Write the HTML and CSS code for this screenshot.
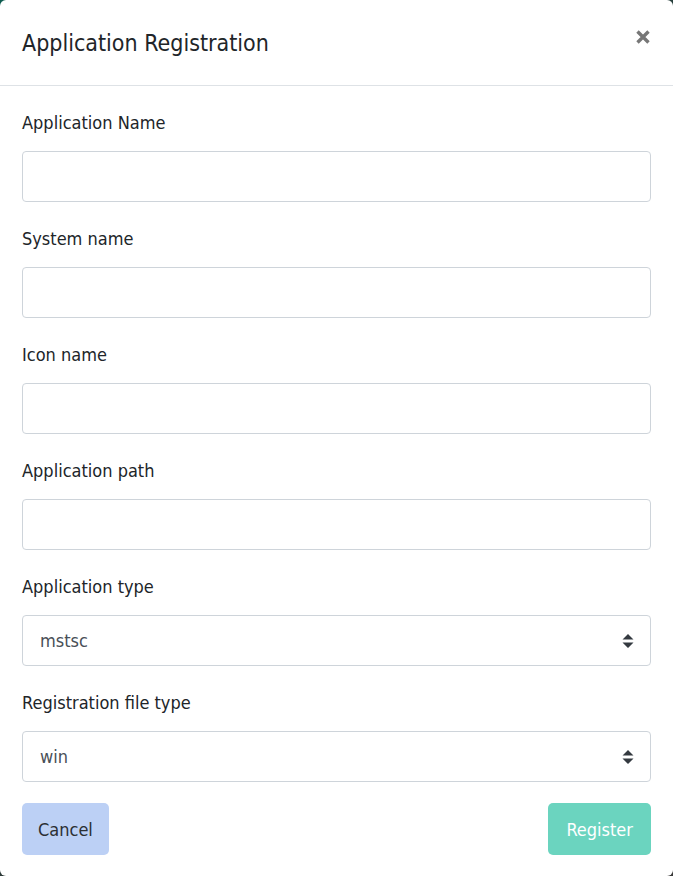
FILE: index.html
```
<!DOCTYPE html>
<html lang="en">
  <head>
    <meta charset="UTF-8" />
    <meta name="viewport" content="width=device-width, initial-scale=1.0" />
    <title>Application Registration</title>
    <link rel="stylesheet" href="styles.css">
  </head>
  <body>
    <div class="modal">
      <div class="modal-header">
        <h5 class="modal-title">Application Registration</h5>
        <button class="close" type="button" aria-label="Close">
          <svg width="16" height="16" viewBox="0 0 16 16">
            <path d="M2.5 2.5 L13.5 13.5 M13.5 2.5 L2.5 13.5" stroke="#777" stroke-width="3.4" stroke-linecap="butt" />
          </svg>
        </button>
      </div>
      <div class="modal-body">
        <div class="form-group">
          <label>Application Name</label>
          <input class="form-control" type="text">
        </div>
        <div class="form-group">
          <label>System name</label>
          <input class="form-control" type="text">
        </div>
        <div class="form-group">
          <label>Icon name</label>
          <input class="form-control" type="text">
        </div>
        <div class="form-group">
          <label>Application path</label>
          <input class="form-control" type="text">
        </div>
        <div class="form-group">
          <label>Application type</label>
          <select class="form-control custom-select">
            <option>mstsc</option>
          </select>
        </div>
        <div class="form-group">
          <label>Registration file type</label>
          <select class="form-control custom-select">
            <option>win</option>
          </select>
        </div>
      </div>
      <div class="modal-footer">
        <button class="btn btn-cancel" type="button">Cancel</button>
        <button class="btn btn-register" type="button">Register</button>
      </div>
    </div>
  </body>
</html>
```

FILE: styles.css
```
* {
  box-sizing: border-box;
}

body {
  margin: 0;
  height: 100vh;
  background: linear-gradient(135deg, #0e5c50 0%, #2a3a38 50%, #3a3a3a 100%);
  font-family: 'DejaVu Sans Condensed', 'DejaVu Sans', sans-serif;
  color: #212529;
}

.modal {
  display: flex;
  flex-direction: column;
  height: 876px;
  background: #fff;
  border-radius: 6px;
  overflow: hidden;
}

.modal-header {
  display: flex;
  align-items: center;
  justify-content: space-between;
  height: 86px;
  padding: 0 22px;
  border-bottom: 1px solid #dee2e6;
}

.modal-title {
  margin: 0;
  font-size: 23px;
  font-weight: 400;
  color: #212529;
}

.close {
  display: flex;
  padding: 0;
  margin-top: -12px;
  border: 0;
  background: none;
}

.modal-body {
  padding: 22px 22px 0;
}

.form-group {
  display: flex;
  flex-direction: column;
  margin-bottom: 22px;
}

.form-group:last-child {
  margin-bottom: 0;
}

label {
  font-size: 18px;
  line-height: 30px;
  margin-bottom: 13px;
  color: #212529;
}

.form-control {
  height: 51px;
  width: 100%;
  padding: 0 17px;
  font-family: inherit;
  font-size: 18px;
  color: #495057;
  background: #fff;
  border: 1px solid #ced4da;
  border-radius: 4px;
}

.custom-select {
  appearance: none;
  -webkit-appearance: none;
  background-image: url("data:image/svg+xml,%3Csvg xmlns='http://www.w3.org/2000/svg' width='12' height='14' viewBox='0 0 12 14'%3E%3Cpath d='M0.5 5.5 L6 0 L11.5 5.5 Z M0.5 8.5 L6 14 L11.5 8.5 Z' fill='%23343a40'/%3E%3C/svg%3E");
  background-repeat: no-repeat;
  background-position: right 16px center;
  background-size: 12px 14px;
}

.modal-footer {
  display: flex;
  justify-content: space-between;
  padding: 21px 22px;
}

.btn {
  height: 52px;
  padding: 0 16px;
  font-family: inherit;
  font-size: 18px;
  border: 0;
  border-radius: 5px;
}

.btn-cancel {
  background: #bcd0f5;
  color: #2b2f33;
}

.btn-register {
  padding: 0 18px;
  background: #6bd4bf;
  color: #fff;
}
```
